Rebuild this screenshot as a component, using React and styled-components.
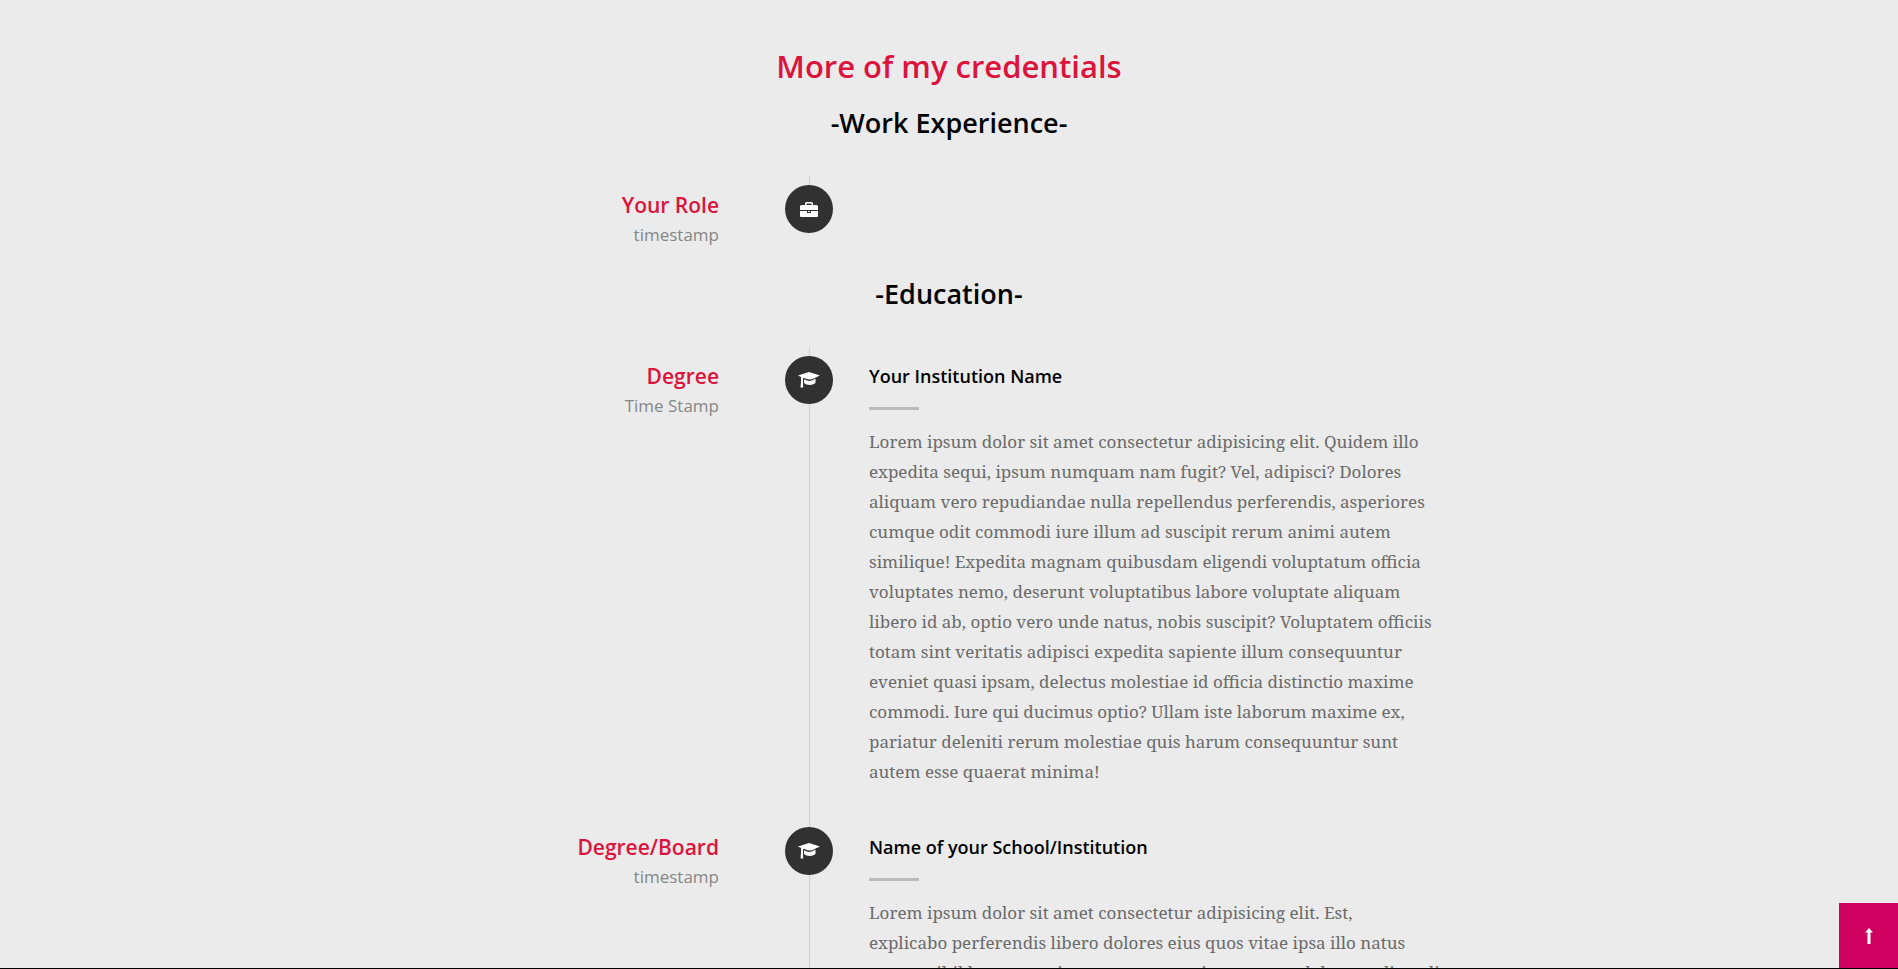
import React from "react";
import styled, { createGlobalStyle } from "styled-components";

const sans = '"Open Sans", "Noto Sans", sans-serif';
const serif = '"Noto Serif", "Liberation Serif", serif';

const GlobalStyle = createGlobalStyle`
  *, *::before, *::after { box-sizing: border-box; }
  body { margin: 0; background: #ebebeb; }
  h1, h2, h3, h4, p, ol { margin: 0; padding: 0; }
`;

const Page = styled.main`
  height: 100vh;
  overflow: hidden;
  padding: 46px 16px 0;
  background: #ebebeb;
  border-bottom: 1px solid #000;
  font-family: ${sans};
`;

const Title = styled.h1`
  margin-bottom: 19px;
  color: #dc143c;
  font-size: 31px;
  font-weight: 600;
  line-height: 40px;
  text-align: center;
`;

const SectionTitle = styled.h2`
  margin-bottom: 35px;
  color: #000;
  font-size: 27px;
  font-weight: 600;
  line-height: 36px;
  text-align: center;
`;

const Timeline = styled.ol`
  max-width: 940px;
  margin: 0 auto;
  list-style: none;
`;

const Entry = styled.li`
  display: grid;
  grid-template-columns: 306px 48px minmax(0, 1fr);
`;

const Side = styled.div`
  padding: 14px 66px 26px 0;
  text-align: right;
`;

const Role = styled.h3`
  color: #dc143c;
  font-size: 21px;
  font-weight: 600;
  line-height: 30px;
`;

const Period = styled.p`
  color: #868686;
  font-size: 17px;
  line-height: 30px;
`;

const Rail = styled.div`
  display: flex;
  justify-content: center;
  align-self: ${(p) => (p.$open ? "stretch" : "start")};
  padding-top: 9px;
  background: linear-gradient(#d0d0d0, #d0d0d0) 24px 0 / 1px 100% no-repeat;
`;

const Badge = styled.span`
  display: flex;
  align-items: center;
  justify-content: center;
  width: 48px;
  height: 48px;
  border-radius: 50%;
  background: #313131;
  color: #fff;
`;

const Details = styled.div`
  padding: 14px 0 31px 36px;
`;

const Institution = styled.h4`
  color: #000;
  font-size: 18px;
  font-weight: 600;
  line-height: 30px;

  &::after {
    content: "";
    display: block;
    width: 50px;
    height: 3px;
    margin: 16px 0 17px;
    background: #bbb;
  }
`;

const Description = styled.p`
  color: #6a6a6a;
  font-family: ${serif};
  font-size: 17px;
  line-height: 30px;
  white-space: pre;

  @media (max-width: 1000px) {
    white-space: normal;
  }
`;

const TopButton = styled.button`
  position: fixed;
  right: 0;
  bottom: 1px;
  display: flex;
  align-items: center;
  justify-content: center;
  width: 59px;
  height: 65px;
  padding: 0;
  border: 0;
  background: #ce0060;
  color: #fff;
  cursor: pointer;
`;

const BriefcaseIcon = () => (
  <svg width="18" height="15" viewBox="0 0 18 15" fill="currentColor" aria-hidden="true">
    <path d="M5 3V1.500Q5 0 6.500 0h5Q13 0 13 1.500V3h3.500Q18 3 18 4.500V8H0V4.500Q0 3 1.500 3zM6.500 3h5V1.500h-5z" fillRule="evenodd" />
    <path d="M0 9h7v2h4V9h7v5q0 1-1 1H1q-1 0-1-1zM8 9h2v1H8z" />
  </svg>
);

const CapIcon = () => (
  <svg width="22" height="16" viewBox="0 0 22 16" fill="currentColor" aria-hidden="true">
    <path d="M11 0L22 3.500L16.500 6Q14 7.500 11.500 7.500Q8.500 7.500 5.800 5.800L5 6.400V10L5.200 15.500H2.500L3 10V5L0 3.500z" />
    <path d="M6 7.300Q9 8.900 11.500 8.900Q14.500 8.800 17.500 6.600V11Q15 13 11.800 13Q8 13 6 11z" />
  </svg>
);

const ArrowIcon = () => (
  <svg width="8" height="16" viewBox="0 0 8 16" fill="currentColor" aria-hidden="true">
    <path d="M4 0L8 4.500H5.500V16H2.500V4.500H0z" />
  </svg>
);

const work = [{ role: "Your Role", period: "timestamp", icon: BriefcaseIcon }];

const education = [
  {
    role: "Degree",
    period: "Time Stamp",
    icon: CapIcon,
    institution: "Your Institution Name",
    text: `Lorem ipsum dolor sit amet consectetur adipisicing elit. Quidem illo
expedita sequi, ipsum numquam nam fugit? Vel, adipisci? Dolores
aliquam vero repudiandae nulla repellendus perferendis, asperiores
cumque odit commodi iure illum ad suscipit rerum animi autem
similique! Expedita magnam quibusdam eligendi voluptatum officia
voluptates nemo, deserunt voluptatibus labore voluptate aliquam
libero id ab, optio vero unde natus, nobis suscipit? Voluptatem officiis
totam sint veritatis adipisci expedita sapiente illum consequuntur
eveniet quasi ipsam, delectus molestiae id officia distinctio maxime
commodi. Iure qui ducimus optio? Ullam iste laborum maxime ex,
pariatur deleniti rerum molestiae quis harum consequuntur sunt
autem esse quaerat minima!`,
  },
  {
    role: "Degree/Board",
    period: "timestamp",
    icon: CapIcon,
    institution: "Name of your School/Institution",
    text: `Lorem ipsum dolor sit amet consectetur adipisicing elit. Est,
explicabo perferendis libero dolores eius quos vitae ipsa illo natus
rerum nihil harum veniam cumque quasi numquam dolorum eligendi`,
  },
];

const TimelineEntry = ({ role, period, icon: Icon, institution, text }) => (
  <Entry>
    <Side>
      <Role>{role}</Role>
      <Period>{period}</Period>
    </Side>
    <Rail $open={Boolean(text)}>
      <Badge>
        <Icon />
      </Badge>
    </Rail>
    {text && (
      <Details>
        <Institution>{institution}</Institution>
        <Description>{text}</Description>
      </Details>
    )}
  </Entry>
);

const Section = ({ title, entries }) => (
  <section>
    <SectionTitle>{title}</SectionTitle>
    <Timeline>
      {entries.map((entry) => (
        <TimelineEntry key={entry.role} {...entry} />
      ))}
    </Timeline>
  </section>
);

export default function App() {
  return (
    <>
      <GlobalStyle />
      <Page>
        <Title>More of my credentials</Title>
        <Section title="-Work Experience-" entries={work} />
        <Section title="-Education-" entries={education} />
      </Page>
      <TopButton type="button" aria-label="Back to top">
        <ArrowIcon />
      </TopButton>
    </>
  );
}
